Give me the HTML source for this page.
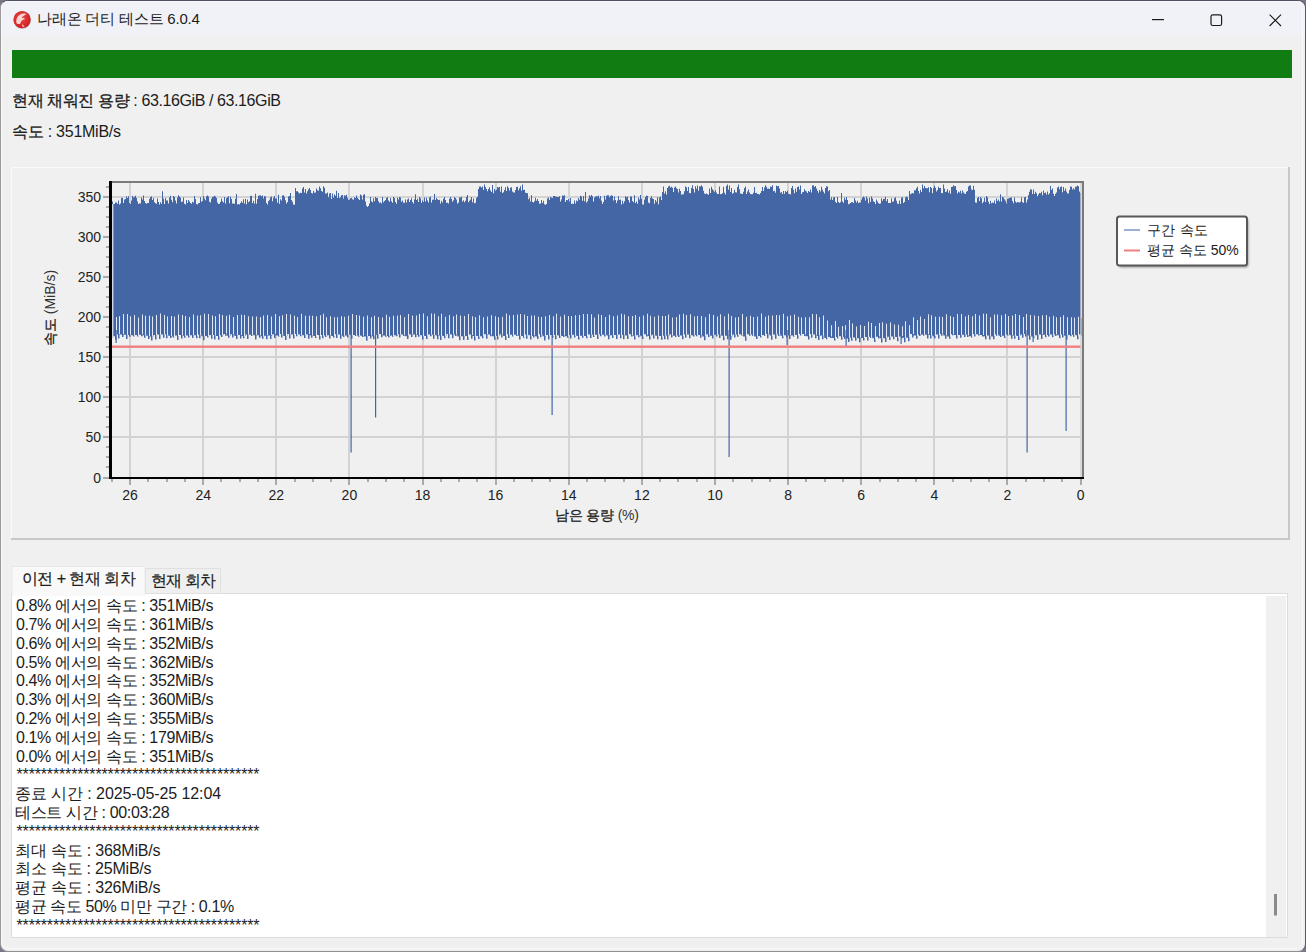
<!DOCTYPE html>
<html><head><meta charset="utf-8">
<style>
html,body{margin:0;padding:0;}
body{width:1306px;height:952px;overflow:hidden;background:#7d7488;position:relative;font-family:"Liberation Sans",sans-serif;color:#1c1c1c;}
.win{position:absolute;left:0;top:0;width:1304px;height:950px;border:1px solid;border-color:#4d5260 #555a68 #909090 #9a9a9a;border-radius:8px;background:#f0f0f0;overflow:hidden;}
.hl{position:absolute;left:1px;top:1px;width:1302px;height:948px;border:1px solid #f8f9fc;border-radius:7px;box-sizing:border-box;}
.title{position:absolute;left:0;top:0;width:1304px;height:40px;background:linear-gradient(#f1f2f8 0,#f1f2f7 75%,#f0f0f0 100%);}
.t{position:absolute;white-space:pre;line-height:1;}
.sk{-webkit-text-stroke:0.3px #1c1c1c;}
svg{position:absolute;left:0;top:0;}
</style></head><body>
<div class="win">
 <div class="title"></div>
</div>
<div class="hl"></div>
<!-- title bar icons -->
<svg width="1306" height="952" viewBox="0 0 1306 952" style="left:0;top:0">
 <defs>
  <filter id="blur1" x="-10%" y="-10%" width="120%" height="120%"><feGaussianBlur stdDeviation="1.2"/></filter>
  <radialGradient id="ig" cx="0.45" cy="0.4" r="0.65"><stop offset="0" stop-color="#e84848"/><stop offset="0.8" stop-color="#d42424"/><stop offset="1" stop-color="#c02030"/></radialGradient>
 </defs>
 <circle cx="22.1" cy="19.9" r="8.9" fill="#8a8a8a" opacity="0.55"/>
 <circle cx="22.1" cy="19.7" r="8.6" fill="url(#ig)"/>
 <path d="M16.3,22.5 C16,18 18.5,14.2 23.5,13.6 C25,13.5 26.2,13.9 26.6,14.3 C24,15.2 22.5,16.6 21.8,18.2 C23.2,17.6 24.6,18.2 25,19.3 C23,19.4 21,20.6 20.2,23.8 C18.5,24.5 16.8,24 16.3,22.5Z" fill="#fde2dc" opacity="0.92"/>
 <path d="M22.2,24.2 C23.2,24.8 24.2,26 24.6,27.2 C23.6,27.4 22.6,26.6 22.0,25.4Z" fill="#fbd0c8" opacity="0.9"/>
 <rect x="1152" y="19" width="12" height="1.2" fill="#1a1a1a"/>
 <rect x="1211" y="14.9" width="10.6" height="10.6" rx="1.8" fill="none" stroke="#1a1a1a" stroke-width="1.2"/>
 <path d="M1269.6,14.6 L1281,26 M1281,14.6 L1269.6,26" stroke="#1a1a1a" stroke-width="1.1"/>
 <!-- progress bar -->
 <rect x="12" y="50" width="1280" height="28" fill="#117c11"/>
 <!-- chart panel -->
 <rect x="11" y="167" width="1278" height="1" fill="#fafafa"/>
 <rect x="11" y="167" width="1" height="372" fill="#fafafa"/>
 <rect x="1288" y="167" width="2" height="373" fill="#c8c8c8"/>
 <rect x="11" y="538" width="1279" height="2" fill="#c8c8c8"/>
 <rect x="1080" y="183" width="2" height="294" fill="#d3d3d3"/>
<rect x="1006" y="183" width="2" height="294" fill="#d3d3d3"/>
<rect x="933" y="183" width="2" height="294" fill="#d3d3d3"/>
<rect x="860" y="183" width="2" height="294" fill="#d3d3d3"/>
<rect x="787" y="183" width="2" height="294" fill="#d3d3d3"/>
<rect x="714" y="183" width="2" height="294" fill="#d3d3d3"/>
<rect x="641" y="183" width="2" height="294" fill="#d3d3d3"/>
<rect x="568" y="183" width="2" height="294" fill="#d3d3d3"/>
<rect x="495" y="183" width="2" height="294" fill="#d3d3d3"/>
<rect x="422" y="183" width="2" height="294" fill="#d3d3d3"/>
<rect x="348" y="183" width="2" height="294" fill="#d3d3d3"/>
<rect x="275" y="183" width="2" height="294" fill="#d3d3d3"/>
<rect x="202" y="183" width="2" height="294" fill="#d3d3d3"/>
<rect x="129" y="183" width="2" height="294" fill="#d3d3d3"/>
<rect x="111" y="436" width="970" height="2" fill="#d3d3d3"/>
<rect x="111" y="396" width="970" height="2" fill="#d3d3d3"/>
<rect x="111" y="356" width="970" height="2" fill="#d3d3d3"/>
<rect x="111" y="316" width="970" height="2" fill="#d3d3d3"/>
<rect x="111" y="276" width="970" height="2" fill="#d3d3d3"/>
<rect x="111" y="236" width="970" height="2" fill="#d3d3d3"/>
<rect x="111" y="196" width="970" height="2" fill="#d3d3d3"/>
 <path d="M112,320 L112.0,201.5 L113.0,201.5 L113.0,204.1 L114.0,204.1 L114.0,204.0 L115.0,204.0 L115.0,202.4 L116.0,202.4 L116.0,202.6 L117.0,202.6 L117.0,203.7 L118.0,203.7 L118.0,200.5 L119.0,200.5 L119.0,204.6 L120.0,204.6 L120.0,203.4 L121.0,203.4 L121.0,198.1 L122.0,198.1 L122.0,197.8 L123.0,197.8 L123.0,203.0 L124.0,203.0 L124.0,199.5 L125.0,199.5 L125.0,198.9 L126.0,198.9 L126.0,196.4 L127.0,196.4 L127.0,198.0 L128.0,198.0 L128.0,196.2 L129.0,196.2 L129.0,202.9 L130.0,202.9 L130.0,204.0 L131.0,204.0 L131.0,200.5 L132.0,200.5 L132.0,195.7 L133.0,195.7 L133.0,197.6 L134.0,197.6 L134.0,196.7 L135.0,196.7 L135.0,195.7 L136.0,195.7 L136.0,197.9 L137.0,197.9 L137.0,201.4 L138.0,201.4 L138.0,203.9 L139.0,203.9 L139.0,203.3 L140.0,203.3 L140.0,203.6 L141.0,203.6 L141.0,197.5 L142.0,197.5 L142.0,199.6 L143.0,199.6 L143.0,195.6 L144.0,195.6 L144.0,200.9 L145.0,200.9 L145.0,203.0 L146.0,203.0 L146.0,203.8 L147.0,203.8 L147.0,202.9 L148.0,202.9 L148.0,203.0 L149.0,203.0 L149.0,199.1 L150.0,199.1 L150.0,197.0 L151.0,197.0 L151.0,196.6 L152.0,196.6 L152.0,199.9 L153.0,199.9 L153.0,197.9 L154.0,197.9 L154.0,202.2 L155.0,202.2 L155.0,203.2 L156.0,203.2 L156.0,203.8 L157.0,203.8 L157.0,198.4 L158.0,198.4 L158.0,202.0 L159.0,202.0 L159.0,204.6 L160.0,204.6 L160.0,202.2 L161.0,202.2 L161.0,203.7 L162.0,203.7 L162.0,191.2 L163.0,191.2 L163.0,198.7 L164.0,198.7 L164.0,204.0 L165.0,204.0 L165.0,198.0 L166.0,198.0 L166.0,200.4 L167.0,200.4 L167.0,200.6 L168.0,200.6 L168.0,203.5 L169.0,203.5 L169.0,197.6 L170.0,197.6 L170.0,195.7 L171.0,195.7 L171.0,199.8 L172.0,199.8 L172.0,202.2 L173.0,202.2 L173.0,195.9 L174.0,195.9 L174.0,196.7 L175.0,196.7 L175.0,200.5 L176.0,200.5 L176.0,203.5 L177.0,203.5 L177.0,197.4 L178.0,197.4 L178.0,195.3 L179.0,195.3 L179.0,196.5 L180.0,196.5 L180.0,197.7 L181.0,197.7 L181.0,201.9 L182.0,201.9 L182.0,201.6 L183.0,201.6 L183.0,197.6 L184.0,197.6 L184.0,203.7 L185.0,203.7 L185.0,204.5 L186.0,204.5 L186.0,200.0 L187.0,200.0 L187.0,202.9 L188.0,202.9 L188.0,200.0 L189.0,200.0 L189.0,201.5 L190.0,201.5 L190.0,202.9 L191.0,202.9 L191.0,203.8 L192.0,203.8 L192.0,201.8 L193.0,201.8 L193.0,202.4 L194.0,202.4 L194.0,196.0 L195.0,196.0 L195.0,198.9 L196.0,198.9 L196.0,203.9 L197.0,203.9 L197.0,204.5 L198.0,204.5 L198.0,203.2 L199.0,203.2 L199.0,202.9 L200.0,202.9 L200.0,197.3 L201.0,197.3 L201.0,201.8 L202.0,201.8 L202.0,201.0 L203.0,201.0 L203.0,195.9 L204.0,195.9 L204.0,198.6 L205.0,198.6 L205.0,200.3 L206.0,200.3 L206.0,196.3 L207.0,196.3 L207.0,195.6 L208.0,195.6 L208.0,196.5 L209.0,196.5 L209.0,201.8 L210.0,201.8 L210.0,202.6 L211.0,202.6 L211.0,198.8 L212.0,198.8 L212.0,197.1 L213.0,197.1 L213.0,196.7 L214.0,196.7 L214.0,195.8 L215.0,195.8 L215.0,196.5 L216.0,196.5 L216.0,198.1 L217.0,198.1 L217.0,202.4 L218.0,202.4 L218.0,204.1 L219.0,204.1 L219.0,203.7 L220.0,203.7 L220.0,201.9 L221.0,201.9 L221.0,198.5 L222.0,198.5 L222.0,201.2 L223.0,201.2 L223.0,202.5 L224.0,202.5 L224.0,196.9 L225.0,196.9 L225.0,203.4 L226.0,203.4 L226.0,198.2 L227.0,198.2 L227.0,197.3 L228.0,197.3 L228.0,196.2 L229.0,196.2 L229.0,203.2 L230.0,203.2 L230.0,196.7 L231.0,196.7 L231.0,199.1 L232.0,199.1 L232.0,203.4 L233.0,203.4 L233.0,203.5 L234.0,203.5 L234.0,203.7 L235.0,203.7 L235.0,198.8 L236.0,198.8 L236.0,194.0 L237.0,194.0 L237.0,204.4 L238.0,204.4 L238.0,204.0 L239.0,204.0 L239.0,204.5 L240.0,204.5 L240.0,202.9 L241.0,202.9 L241.0,201.3 L242.0,201.3 L242.0,202.7 L243.0,202.7 L243.0,199.2 L244.0,199.2 L244.0,203.4 L245.0,203.4 L245.0,198.7 L246.0,198.7 L246.0,204.3 L247.0,204.3 L247.0,199.5 L248.0,199.5 L248.0,202.2 L249.0,202.2 L249.0,201.2 L250.0,201.2 L250.0,196.1 L251.0,196.1 L251.0,195.7 L252.0,195.7 L252.0,202.9 L253.0,202.9 L253.0,200.8 L254.0,200.8 L254.0,203.6 L255.0,203.6 L255.0,193.8 L256.0,193.8 L256.0,203.8 L257.0,203.8 L257.0,199.0 L258.0,199.0 L258.0,195.8 L259.0,195.8 L259.0,195.4 L260.0,195.4 L260.0,195.3 L261.0,195.3 L261.0,196.2 L262.0,196.2 L262.0,195.4 L263.0,195.4 L263.0,198.6 L264.0,198.6 L264.0,196.1 L265.0,196.1 L265.0,196.6 L266.0,196.6 L266.0,203.0 L267.0,203.0 L267.0,204.5 L268.0,204.5 L268.0,201.0 L269.0,201.0 L269.0,199.8 L270.0,199.8 L270.0,197.3 L271.0,197.3 L271.0,196.6 L272.0,196.6 L272.0,201.3 L273.0,201.3 L273.0,197.7 L274.0,197.7 L274.0,196.0 L275.0,196.0 L275.0,198.5 L276.0,198.5 L276.0,198.4 L277.0,198.4 L277.0,202.7 L278.0,202.7 L278.0,194.8 L279.0,194.8 L279.0,203.7 L280.0,203.7 L280.0,199.2 L281.0,199.2 L281.0,200.4 L282.0,200.4 L282.0,195.5 L283.0,195.5 L283.0,195.2 L284.0,195.2 L284.0,196.7 L285.0,196.7 L285.0,200.3 L286.0,200.3 L286.0,203.4 L287.0,203.4 L287.0,201.9 L288.0,201.9 L288.0,196.6 L289.0,196.6 L289.0,196.0 L290.0,196.0 L290.0,193.0 L291.0,193.0 L291.0,200.1 L292.0,200.1 L292.0,201.7 L293.0,201.7 L293.0,204.4 L294.0,204.4 L294.0,204.7 L295.0,204.7 L295.0,188.0 L296.0,188.0 L296.0,191.3 L297.0,191.3 L297.0,191.3 L298.0,191.3 L298.0,192.4 L299.0,192.4 L299.0,193.6 L300.0,193.6 L300.0,192.8 L301.0,192.8 L301.0,192.9 L302.0,192.9 L302.0,188.4 L303.0,188.4 L303.0,187.1 L304.0,187.1 L304.0,192.6 L305.0,192.6 L305.0,189.0 L306.0,189.0 L306.0,193.6 L307.0,193.6 L307.0,191.3 L308.0,191.3 L308.0,189.3 L309.0,189.3 L309.0,187.9 L310.0,187.9 L310.0,189.9 L311.0,189.9 L311.0,193.1 L312.0,193.1 L312.0,193.5 L313.0,193.5 L313.0,191.1 L314.0,191.1 L314.0,192.7 L315.0,192.7 L315.0,192.6 L316.0,192.6 L316.0,188.4 L317.0,188.4 L317.0,190.2 L318.0,190.2 L318.0,190.8 L319.0,190.8 L319.0,186.4 L320.0,186.4 L320.0,188.2 L321.0,188.2 L321.0,190.9 L322.0,190.9 L322.0,191.7 L323.0,191.7 L323.0,186.2 L324.0,186.2 L324.0,187.7 L325.0,187.7 L325.0,193.5 L326.0,193.5 L326.0,193.5 L327.0,193.5 L327.0,192.6 L328.0,192.6 L328.0,197.2 L329.0,197.2 L329.0,193.4 L330.0,193.4 L330.0,192.9 L331.0,192.9 L331.0,199.0 L332.0,199.0 L332.0,193.5 L333.0,193.5 L333.0,197.8 L334.0,197.8 L334.0,194.6 L335.0,194.6 L335.0,195.8 L336.0,195.8 L336.0,190.8 L337.0,190.8 L337.0,198.0 L338.0,198.0 L338.0,193.0 L339.0,193.0 L339.0,198.0 L340.0,198.0 L340.0,197.3 L341.0,197.3 L341.0,195.3 L342.0,195.3 L342.0,195.1 L343.0,195.1 L343.0,198.6 L344.0,198.6 L344.0,195.3 L345.0,195.3 L345.0,195.7 L346.0,195.7 L346.0,194.7 L347.0,194.7 L347.0,197.7 L348.0,197.7 L348.0,199.9 L349.0,199.9 L349.0,199.5 L350.0,199.5 L350.0,198.2 L351.0,198.2 L351.0,197.9 L352.0,197.9 L352.0,199.2 L353.0,199.2 L353.0,199.8 L354.0,199.8 L354.0,197.3 L355.0,197.3 L355.0,198.0 L356.0,198.0 L356.0,195.4 L357.0,195.4 L357.0,197.8 L358.0,197.8 L358.0,198.9 L359.0,198.9 L359.0,200.1 L360.0,200.1 L360.0,194.5 L361.0,194.5 L361.0,195.5 L362.0,195.5 L362.0,199.4 L363.0,199.4 L363.0,194.7 L364.0,194.7 L364.0,194.2 L365.0,194.2 L365.0,201.4 L366.0,201.4 L366.0,205.7 L367.0,205.7 L367.0,207.1 L368.0,207.1 L368.0,205.9 L369.0,205.9 L369.0,203.6 L370.0,203.6 L370.0,197.0 L371.0,197.0 L371.0,201.2 L372.0,201.2 L372.0,202.3 L373.0,202.3 L373.0,198.3 L374.0,198.3 L374.0,201.3 L375.0,201.3 L375.0,197.0 L376.0,197.0 L376.0,198.0 L377.0,198.0 L377.0,198.1 L378.0,198.1 L378.0,201.3 L379.0,201.3 L379.0,203.0 L380.0,203.0 L380.0,202.3 L381.0,202.3 L381.0,203.5 L382.0,203.5 L382.0,197.1 L383.0,197.1 L383.0,202.3 L384.0,202.3 L384.0,201.1 L385.0,201.1 L385.0,200.1 L386.0,200.1 L386.0,197.8 L387.0,197.8 L387.0,197.2 L388.0,197.2 L388.0,200.5 L389.0,200.5 L389.0,201.7 L390.0,201.7 L390.0,198.0 L391.0,198.0 L391.0,201.2 L392.0,201.2 L392.0,202.8 L393.0,202.8 L393.0,196.9 L394.0,196.9 L394.0,198.0 L395.0,198.0 L395.0,202.1 L396.0,202.1 L396.0,203.7 L397.0,203.7 L397.0,197.8 L398.0,197.8 L398.0,199.6 L399.0,199.6 L399.0,196.9 L400.0,196.9 L400.0,197.6 L401.0,197.6 L401.0,201.7 L402.0,201.7 L402.0,200.6 L403.0,200.6 L403.0,202.7 L404.0,202.7 L404.0,202.7 L405.0,202.7 L405.0,199.5 L406.0,199.5 L406.0,202.6 L407.0,202.6 L407.0,199.6 L408.0,199.6 L408.0,198.6 L409.0,198.6 L409.0,202.0 L410.0,202.0 L410.0,200.0 L411.0,200.0 L411.0,198.3 L412.0,198.3 L412.0,202.0 L413.0,202.0 L413.0,203.6 L414.0,203.6 L414.0,199.2 L415.0,199.2 L415.0,194.3 L416.0,194.3 L416.0,199.9 L417.0,199.9 L417.0,198.8 L418.0,198.8 L418.0,202.1 L419.0,202.1 L419.0,197.0 L420.0,197.0 L420.0,198.2 L421.0,198.2 L421.0,202.7 L422.0,202.7 L422.0,200.4 L423.0,200.4 L423.0,202.1 L424.0,202.1 L424.0,197.6 L425.0,197.6 L425.0,201.6 L426.0,201.6 L426.0,197.7 L427.0,197.7 L427.0,200.5 L428.0,200.5 L428.0,202.4 L429.0,202.4 L429.0,197.4 L430.0,197.4 L430.0,196.8 L431.0,196.8 L431.0,202.4 L432.0,202.4 L432.0,199.8 L433.0,199.8 L433.0,199.5 L434.0,199.5 L434.0,194.0 L435.0,194.0 L435.0,200.1 L436.0,200.1 L436.0,198.0 L437.0,198.0 L437.0,199.2 L438.0,199.2 L438.0,200.1 L439.0,200.1 L439.0,199.7 L440.0,199.7 L440.0,203.4 L441.0,203.4 L441.0,200.7 L442.0,200.7 L442.0,202.4 L443.0,202.4 L443.0,198.7 L444.0,198.7 L444.0,197.0 L445.0,197.0 L445.0,200.0 L446.0,200.0 L446.0,202.8 L447.0,202.8 L447.0,202.8 L448.0,202.8 L448.0,203.6 L449.0,203.6 L449.0,198.8 L450.0,198.8 L450.0,197.0 L451.0,197.0 L451.0,198.7 L452.0,198.7 L452.0,201.7 L453.0,201.7 L453.0,200.3 L454.0,200.3 L454.0,197.1 L455.0,197.1 L455.0,198.1 L456.0,198.1 L456.0,199.4 L457.0,199.4 L457.0,203.5 L458.0,203.5 L458.0,202.5 L459.0,202.5 L459.0,197.6 L460.0,197.6 L460.0,197.4 L461.0,197.4 L461.0,196.8 L462.0,196.8 L462.0,201.5 L463.0,201.5 L463.0,200.3 L464.0,200.3 L464.0,202.3 L465.0,202.3 L465.0,200.7 L466.0,200.7 L466.0,196.9 L467.0,196.9 L467.0,195.1 L468.0,195.1 L468.0,202.2 L469.0,202.2 L469.0,200.7 L470.0,200.7 L470.0,199.4 L471.0,199.4 L471.0,197.1 L472.0,197.1 L472.0,202.3 L473.0,202.3 L473.0,198.6 L474.0,198.6 L474.0,203.2 L475.0,203.2 L475.0,202.7 L476.0,202.7 L476.0,197.9 L477.0,197.9 L477.0,196.8 L478.0,196.8 L478.0,189.0 L479.0,189.0 L479.0,186.5 L480.0,186.5 L480.0,186.4 L481.0,186.4 L481.0,187.4 L482.0,187.4 L482.0,186.5 L483.0,186.5 L483.0,189.9 L484.0,189.9 L484.0,184.5 L485.0,184.5 L485.0,187.0 L486.0,187.0 L486.0,189.1 L487.0,189.1 L487.0,191.3 L488.0,191.3 L488.0,189.0 L489.0,189.0 L489.0,187.3 L490.0,187.3 L490.0,190.4 L491.0,190.4 L491.0,192.1 L492.0,192.1 L492.0,185.0 L493.0,185.0 L493.0,193.3 L494.0,193.3 L494.0,188.9 L495.0,188.9 L495.0,190.8 L496.0,190.8 L496.0,189.7 L497.0,189.7 L497.0,187.0 L498.0,187.0 L498.0,187.6 L499.0,187.6 L499.0,187.1 L500.0,187.1 L500.0,191.7 L501.0,191.7 L501.0,186.4 L502.0,186.4 L502.0,192.9 L503.0,192.9 L503.0,192.2 L504.0,192.2 L504.0,190.1 L505.0,190.1 L505.0,187.2 L506.0,187.2 L506.0,191.1 L507.0,191.1 L507.0,186.3 L508.0,186.3 L508.0,187.7 L509.0,187.7 L509.0,190.4 L510.0,190.4 L510.0,187.8 L511.0,187.8 L511.0,187.2 L512.0,187.2 L512.0,191.4 L513.0,191.4 L513.0,192.5 L514.0,192.5 L514.0,192.6 L515.0,192.6 L515.0,190.0 L516.0,190.0 L516.0,187.0 L517.0,187.0 L517.0,186.8 L518.0,186.8 L518.0,190.3 L519.0,190.3 L519.0,188.3 L520.0,188.3 L520.0,186.3 L521.0,186.3 L521.0,190.8 L522.0,190.8 L522.0,184.5 L523.0,184.5 L523.0,190.1 L524.0,190.1 L524.0,189.8 L525.0,189.8 L525.0,192.7 L526.0,192.7 L526.0,193.1 L527.0,193.1 L527.0,193.2 L528.0,193.2 L528.0,199.3 L529.0,199.3 L529.0,198.0 L530.0,198.0 L530.0,201.4 L531.0,201.4 L531.0,195.2 L532.0,195.2 L532.0,202.0 L533.0,202.0 L533.0,202.5 L534.0,202.5 L534.0,201.3 L535.0,201.3 L535.0,197.8 L536.0,197.8 L536.0,200.7 L537.0,200.7 L537.0,199.1 L538.0,199.1 L538.0,200.9 L539.0,200.9 L539.0,203.7 L540.0,203.7 L540.0,203.4 L541.0,203.4 L541.0,200.0 L542.0,200.0 L542.0,203.0 L543.0,203.0 L543.0,200.7 L544.0,200.7 L544.0,204.3 L545.0,204.3 L545.0,204.7 L546.0,204.7 L546.0,204.0 L547.0,204.0 L547.0,198.6 L548.0,198.6 L548.0,197.4 L549.0,197.4 L549.0,200.0 L550.0,200.0 L550.0,197.2 L551.0,197.2 L551.0,197.4 L552.0,197.4 L552.0,197.9 L553.0,197.9 L553.0,195.9 L554.0,195.9 L554.0,195.9 L555.0,195.9 L555.0,196.6 L556.0,196.6 L556.0,196.7 L557.0,196.7 L557.0,197.0 L558.0,197.0 L558.0,196.9 L559.0,196.9 L559.0,196.3 L560.0,196.3 L560.0,201.5 L561.0,201.5 L561.0,199.2 L562.0,199.2 L562.0,195.5 L563.0,195.5 L563.0,195.8 L564.0,195.8 L564.0,195.3 L565.0,195.3 L565.0,202.0 L566.0,202.0 L566.0,199.9 L567.0,199.9 L567.0,200.2 L568.0,200.2 L568.0,199.0 L569.0,199.0 L569.0,201.4 L570.0,201.4 L570.0,198.0 L571.0,198.0 L571.0,204.1 L572.0,204.1 L572.0,203.6 L573.0,203.6 L573.0,203.9 L574.0,203.9 L574.0,200.4 L575.0,200.4 L575.0,203.5 L576.0,203.5 L576.0,200.6 L577.0,200.6 L577.0,201.2 L578.0,201.2 L578.0,197.9 L579.0,197.9 L579.0,199.8 L580.0,199.8 L580.0,195.8 L581.0,195.8 L581.0,196.5 L582.0,196.5 L582.0,200.7 L583.0,200.7 L583.0,196.0 L584.0,196.0 L584.0,201.3 L585.0,201.3 L585.0,192.1 L586.0,192.1 L586.0,202.5 L587.0,202.5 L587.0,201.3 L588.0,201.3 L588.0,198.6 L589.0,198.6 L589.0,195.3 L590.0,195.3 L590.0,196.5 L591.0,196.5 L591.0,195.0 L592.0,195.0 L592.0,196.2 L593.0,196.2 L593.0,201.5 L594.0,201.5 L594.0,197.4 L595.0,197.4 L595.0,196.5 L596.0,196.5 L596.0,196.2 L597.0,196.2 L597.0,196.6 L598.0,196.6 L598.0,195.5 L599.0,195.5 L599.0,198.3 L600.0,198.3 L600.0,196.1 L601.0,196.1 L601.0,200.8 L602.0,200.8 L602.0,203.9 L603.0,203.9 L603.0,202.1 L604.0,202.1 L604.0,195.7 L605.0,195.7 L605.0,199.5 L606.0,199.5 L606.0,195.8 L607.0,195.8 L607.0,195.3 L608.0,195.3 L608.0,195.2 L609.0,195.2 L609.0,197.2 L610.0,197.2 L610.0,196.0 L611.0,196.0 L611.0,195.3 L612.0,195.3 L612.0,195.8 L613.0,195.8 L613.0,200.4 L614.0,200.4 L614.0,196.5 L615.0,196.5 L615.0,200.1 L616.0,200.1 L616.0,202.9 L617.0,202.9 L617.0,200.6 L618.0,200.6 L618.0,196.2 L619.0,196.2 L619.0,200.1 L620.0,200.1 L620.0,199.5 L621.0,199.5 L621.0,204.4 L622.0,204.4 L622.0,200.7 L623.0,200.7 L623.0,203.5 L624.0,203.5 L624.0,201.3 L625.0,201.3 L625.0,196.2 L626.0,196.2 L626.0,197.3 L627.0,197.3 L627.0,196.4 L628.0,196.4 L628.0,200.0 L629.0,200.0 L629.0,202.5 L630.0,202.5 L630.0,196.6 L631.0,196.6 L631.0,196.5 L632.0,196.5 L632.0,200.9 L633.0,200.9 L633.0,202.3 L634.0,202.3 L634.0,195.3 L635.0,195.3 L635.0,202.9 L636.0,202.9 L636.0,201.4 L637.0,201.4 L637.0,203.8 L638.0,203.8 L638.0,197.8 L639.0,197.8 L639.0,199.5 L640.0,199.5 L640.0,195.0 L641.0,195.0 L641.0,198.7 L642.0,198.7 L642.0,204.4 L643.0,204.4 L643.0,204.4 L644.0,204.4 L644.0,199.5 L645.0,199.5 L645.0,197.1 L646.0,197.1 L646.0,195.5 L647.0,195.5 L647.0,196.1 L648.0,196.1 L648.0,202.4 L649.0,202.4 L649.0,203.2 L650.0,203.2 L650.0,198.0 L651.0,198.0 L651.0,196.3 L652.0,196.3 L652.0,198.6 L653.0,198.6 L653.0,198.9 L654.0,198.9 L654.0,203.8 L655.0,203.8 L655.0,200.1 L656.0,200.1 L656.0,201.8 L657.0,201.8 L657.0,197.3 L658.0,197.3 L658.0,204.3 L659.0,204.3 L659.0,197.5 L660.0,197.5 L660.0,196.5 L661.0,196.5 L661.0,200.1 L662.0,200.1 L662.0,191.9 L663.0,191.9 L663.0,186.5 L664.0,186.5 L664.0,193.4 L665.0,193.4 L665.0,191.2 L666.0,191.2 L666.0,194.5 L667.0,194.5 L667.0,187.9 L668.0,187.9 L668.0,186.5 L669.0,186.5 L669.0,185.8 L670.0,185.8 L670.0,187.6 L671.0,187.6 L671.0,186.7 L672.0,186.7 L672.0,187.8 L673.0,187.8 L673.0,192.1 L674.0,192.1 L674.0,187.5 L675.0,187.5 L675.0,186.4 L676.0,186.4 L676.0,188.3 L677.0,188.3 L677.0,189.1 L678.0,189.1 L678.0,192.5 L679.0,192.5 L679.0,188.8 L680.0,188.8 L680.0,190.9 L681.0,190.9 L681.0,194.8 L682.0,194.8 L682.0,194.2 L683.0,194.2 L683.0,194.2 L684.0,194.2 L684.0,191.3 L685.0,191.3 L685.0,186.6 L686.0,186.6 L686.0,187.2 L687.0,187.2 L687.0,190.9 L688.0,190.9 L688.0,187.0 L689.0,187.0 L689.0,193.1 L690.0,193.1 L690.0,193.3 L691.0,193.3 L691.0,188.0 L692.0,188.0 L692.0,185.3 L693.0,185.3 L693.0,188.9 L694.0,188.9 L694.0,192.6 L695.0,192.6 L695.0,186.3 L696.0,186.3 L696.0,188.7 L697.0,188.7 L697.0,185.6 L698.0,185.6 L698.0,190.7 L699.0,190.7 L699.0,186.5 L700.0,186.5 L700.0,186.3 L701.0,186.3 L701.0,185.3 L702.0,185.3 L702.0,186.7 L703.0,186.7 L703.0,190.8 L704.0,190.8 L704.0,193.6 L705.0,193.6 L705.0,194.0 L706.0,194.0 L706.0,193.4 L707.0,193.4 L707.0,194.3 L708.0,194.3 L708.0,194.7 L709.0,194.7 L709.0,188.5 L710.0,188.5 L710.0,193.1 L711.0,193.1 L711.0,186.7 L712.0,186.7 L712.0,189.2 L713.0,189.2 L713.0,190.4 L714.0,190.4 L714.0,192.3 L715.0,192.3 L715.0,190.2 L716.0,190.2 L716.0,192.6 L717.0,192.6 L717.0,193.9 L718.0,193.9 L718.0,194.0 L719.0,194.0 L719.0,186.6 L720.0,186.6 L720.0,194.2 L721.0,194.2 L721.0,193.9 L722.0,193.9 L722.0,193.3 L723.0,193.3 L723.0,186.8 L724.0,186.8 L724.0,192.7 L725.0,192.7 L725.0,194.4 L726.0,194.4 L726.0,185.9 L727.0,185.9 L727.0,184.5 L728.0,184.5 L728.0,189.7 L729.0,189.7 L729.0,185.5 L730.0,185.5 L730.0,192.0 L731.0,192.0 L731.0,188.1 L732.0,188.1 L732.0,193.8 L733.0,193.8 L733.0,193.1 L734.0,193.1 L734.0,189.8 L735.0,189.8 L735.0,192.2 L736.0,192.2 L736.0,192.5 L737.0,192.5 L737.0,187.0 L738.0,187.0 L738.0,184.5 L739.0,184.5 L739.0,189.2 L740.0,189.2 L740.0,193.5 L741.0,193.5 L741.0,193.8 L742.0,193.8 L742.0,194.0 L743.0,194.0 L743.0,191.8 L744.0,191.8 L744.0,187.9 L745.0,187.9 L745.0,186.4 L746.0,186.4 L746.0,194.1 L747.0,194.1 L747.0,191.6 L748.0,191.6 L748.0,189.5 L749.0,189.5 L749.0,192.5 L750.0,192.5 L750.0,194.1 L751.0,194.1 L751.0,194.3 L752.0,194.3 L752.0,194.2 L753.0,194.2 L753.0,192.7 L754.0,192.7 L754.0,186.9 L755.0,186.9 L755.0,193.0 L756.0,193.0 L756.0,192.7 L757.0,192.7 L757.0,194.1 L758.0,194.1 L758.0,194.1 L759.0,194.1 L759.0,194.5 L760.0,194.5 L760.0,193.0 L761.0,193.0 L761.0,190.9 L762.0,190.9 L762.0,186.9 L763.0,186.9 L763.0,191.0 L764.0,191.0 L764.0,187.5 L765.0,187.5 L765.0,185.3 L766.0,185.3 L766.0,186.7 L767.0,186.7 L767.0,188.8 L768.0,188.8 L768.0,188.6 L769.0,188.6 L769.0,189.1 L770.0,189.1 L770.0,186.4 L771.0,186.4 L771.0,187.0 L772.0,187.0 L772.0,185.3 L773.0,185.3 L773.0,191.2 L774.0,191.2 L774.0,190.7 L775.0,190.7 L775.0,192.7 L776.0,192.7 L776.0,185.7 L777.0,185.7 L777.0,186.2 L778.0,186.2 L778.0,186.0 L779.0,186.0 L779.0,188.4 L780.0,188.4 L780.0,192.8 L781.0,192.8 L781.0,192.0 L782.0,192.0 L782.0,194.1 L783.0,194.1 L783.0,191.0 L784.0,191.0 L784.0,193.7 L785.0,193.7 L785.0,191.1 L786.0,191.1 L786.0,192.0 L787.0,192.0 L787.0,190.7 L788.0,190.7 L788.0,193.8 L789.0,193.8 L789.0,194.1 L790.0,194.1 L790.0,194.5 L791.0,194.5 L791.0,188.0 L792.0,188.0 L792.0,185.9 L793.0,185.9 L793.0,189.7 L794.0,189.7 L794.0,193.3 L795.0,193.3 L795.0,188.4 L796.0,188.4 L796.0,191.7 L797.0,191.7 L797.0,186.9 L798.0,186.9 L798.0,186.4 L799.0,186.4 L799.0,189.6 L800.0,189.6 L800.0,185.4 L801.0,185.4 L801.0,193.9 L802.0,193.9 L802.0,192.3 L803.0,192.3 L803.0,192.0 L804.0,192.0 L804.0,189.3 L805.0,189.3 L805.0,190.8 L806.0,190.8 L806.0,191.6 L807.0,191.6 L807.0,193.0 L808.0,193.0 L808.0,191.0 L809.0,191.0 L809.0,192.0 L810.0,192.0 L810.0,189.5 L811.0,189.5 L811.0,192.6 L812.0,192.6 L812.0,185.5 L813.0,185.5 L813.0,185.2 L814.0,185.2 L814.0,187.1 L815.0,187.1 L815.0,186.1 L816.0,186.1 L816.0,188.5 L817.0,188.5 L817.0,190.7 L818.0,190.7 L818.0,192.8 L819.0,192.8 L819.0,190.0 L820.0,190.0 L820.0,191.5 L821.0,191.5 L821.0,186.7 L822.0,186.7 L822.0,189.7 L823.0,189.7 L823.0,191.7 L824.0,191.7 L824.0,193.5 L825.0,193.5 L825.0,187.9 L826.0,187.9 L826.0,186.3 L827.0,186.3 L827.0,186.6 L828.0,186.6 L828.0,191.2 L829.0,191.2 L829.0,190.1 L830.0,190.1 L830.0,199.5 L831.0,199.5 L831.0,197.2 L832.0,197.2 L832.0,200.0 L833.0,200.0 L833.0,197.4 L834.0,197.4 L834.0,197.1 L835.0,197.1 L835.0,201.8 L836.0,201.8 L836.0,203.0 L837.0,203.0 L837.0,197.1 L838.0,197.1 L838.0,201.9 L839.0,201.9 L839.0,202.9 L840.0,202.9 L840.0,202.2 L841.0,202.2 L841.0,192.9 L842.0,192.9 L842.0,201.6 L843.0,201.6 L843.0,202.8 L844.0,202.8 L844.0,197.8 L845.0,197.8 L845.0,199.8 L846.0,199.8 L846.0,197.1 L847.0,197.1 L847.0,199.9 L848.0,199.9 L848.0,204.2 L849.0,204.2 L849.0,203.7 L850.0,203.7 L850.0,203.1 L851.0,203.1 L851.0,202.2 L852.0,202.2 L852.0,202.1 L853.0,202.1 L853.0,203.1 L854.0,203.1 L854.0,198.0 L855.0,198.0 L855.0,200.6 L856.0,200.6 L856.0,202.5 L857.0,202.5 L857.0,200.7 L858.0,200.7 L858.0,202.9 L859.0,202.9 L859.0,202.5 L860.0,202.5 L860.0,202.6 L861.0,202.6 L861.0,199.7 L862.0,199.7 L862.0,197.6 L863.0,197.6 L863.0,196.4 L864.0,196.4 L864.0,197.5 L865.0,197.5 L865.0,200.6 L866.0,200.6 L866.0,196.5 L867.0,196.5 L867.0,198.4 L868.0,198.4 L868.0,203.2 L869.0,203.2 L869.0,197.7 L870.0,197.7 L870.0,201.9 L871.0,201.9 L871.0,196.6 L872.0,196.6 L872.0,198.6 L873.0,198.6 L873.0,201.2 L874.0,201.2 L874.0,202.0 L875.0,202.0 L875.0,203.9 L876.0,203.9 L876.0,199.6 L877.0,199.6 L877.0,201.6 L878.0,201.6 L878.0,203.2 L879.0,203.2 L879.0,203.8 L880.0,203.8 L880.0,203.4 L881.0,203.4 L881.0,198.2 L882.0,198.2 L882.0,200.8 L883.0,200.8 L883.0,199.1 L884.0,199.1 L884.0,198.8 L885.0,198.8 L885.0,196.8 L886.0,196.8 L886.0,201.3 L887.0,201.3 L887.0,199.1 L888.0,199.1 L888.0,202.9 L889.0,202.9 L889.0,202.9 L890.0,202.9 L890.0,203.1 L891.0,203.1 L891.0,198.3 L892.0,198.3 L892.0,201.8 L893.0,201.8 L893.0,201.4 L894.0,201.4 L894.0,198.1 L895.0,198.1 L895.0,197.2 L896.0,197.2 L896.0,200.8 L897.0,200.8 L897.0,203.7 L898.0,203.7 L898.0,203.8 L899.0,203.8 L899.0,200.4 L900.0,200.4 L900.0,204.1 L901.0,204.1 L901.0,197.8 L902.0,197.8 L902.0,197.2 L903.0,197.2 L903.0,203.1 L904.0,203.1 L904.0,201.9 L905.0,201.9 L905.0,197.4 L906.0,197.4 L906.0,196.6 L907.0,196.6 L907.0,197.2 L908.0,197.2 L908.0,200.1 L909.0,200.1 L909.0,190.9 L910.0,190.9 L910.0,194.2 L911.0,194.2 L911.0,193.5 L912.0,193.5 L912.0,193.0 L913.0,193.0 L913.0,193.6 L914.0,193.6 L914.0,190.3 L915.0,190.3 L915.0,190.2 L916.0,190.2 L916.0,188.2 L917.0,188.2 L917.0,186.7 L918.0,186.7 L918.0,191.1 L919.0,191.1 L919.0,193.6 L920.0,193.6 L920.0,189.7 L921.0,189.7 L921.0,191.9 L922.0,191.9 L922.0,184.5 L923.0,184.5 L923.0,188.2 L924.0,188.2 L924.0,186.1 L925.0,186.1 L925.0,188.1 L926.0,188.1 L926.0,188.2 L927.0,188.2 L927.0,188.3 L928.0,188.3 L928.0,187.2 L929.0,187.2 L929.0,192.3 L930.0,192.3 L930.0,187.0 L931.0,187.0 L931.0,188.1 L932.0,188.1 L932.0,193.3 L933.0,193.3 L933.0,188.1 L934.0,188.1 L934.0,185.7 L935.0,185.7 L935.0,187.8 L936.0,187.8 L936.0,191.6 L937.0,191.6 L937.0,190.1 L938.0,190.1 L938.0,186.7 L939.0,186.7 L939.0,187.9 L940.0,187.9 L940.0,188.0 L941.0,188.0 L941.0,193.0 L942.0,193.0 L942.0,193.3 L943.0,193.3 L943.0,184.5 L944.0,184.5 L944.0,188.5 L945.0,188.5 L945.0,192.1 L946.0,192.1 L946.0,191.4 L947.0,191.4 L947.0,189.3 L948.0,189.3 L948.0,192.8 L949.0,192.8 L949.0,190.4 L950.0,190.4 L950.0,193.7 L951.0,193.7 L951.0,186.9 L952.0,186.9 L952.0,186.7 L953.0,186.7 L953.0,185.3 L954.0,185.3 L954.0,186.3 L955.0,186.3 L955.0,186.0 L956.0,186.0 L956.0,190.1 L957.0,190.1 L957.0,193.5 L958.0,193.5 L958.0,191.8 L959.0,191.8 L959.0,192.5 L960.0,192.5 L960.0,190.8 L961.0,190.8 L961.0,193.4 L962.0,193.4 L962.0,190.6 L963.0,190.6 L963.0,192.4 L964.0,192.4 L964.0,193.5 L965.0,193.5 L965.0,194.0 L966.0,194.0 L966.0,191.7 L967.0,191.7 L967.0,191.0 L968.0,191.0 L968.0,186.4 L969.0,186.4 L969.0,185.4 L970.0,185.4 L970.0,185.4 L971.0,185.4 L971.0,189.5 L972.0,189.5 L972.0,189.9 L973.0,189.9 L973.0,185.8 L974.0,185.8 L974.0,189.7 L975.0,189.7 L975.0,202.5 L976.0,202.5 L976.0,202.7 L977.0,202.7 L977.0,197.9 L978.0,197.9 L978.0,197.0 L979.0,197.0 L979.0,201.0 L980.0,201.0 L980.0,197.0 L981.0,197.0 L981.0,198.2 L982.0,198.2 L982.0,203.3 L983.0,203.3 L983.0,201.7 L984.0,201.7 L984.0,197.8 L985.0,197.8 L985.0,201.9 L986.0,201.9 L986.0,196.1 L987.0,196.1 L987.0,197.3 L988.0,197.3 L988.0,201.8 L989.0,201.8 L989.0,204.0 L990.0,204.0 L990.0,200.7 L991.0,200.7 L991.0,203.2 L992.0,203.2 L992.0,202.6 L993.0,202.6 L993.0,203.0 L994.0,203.0 L994.0,200.5 L995.0,200.5 L995.0,203.7 L996.0,203.7 L996.0,198.5 L997.0,198.5 L997.0,200.9 L998.0,200.9 L998.0,199.4 L999.0,199.4 L999.0,201.6 L1000.0,201.6 L1000.0,194.2 L1001.0,194.2 L1001.0,201.6 L1002.0,201.6 L1002.0,196.8 L1003.0,196.8 L1003.0,197.4 L1004.0,197.4 L1004.0,199.3 L1005.0,199.3 L1005.0,200.8 L1006.0,200.8 L1006.0,203.6 L1007.0,203.6 L1007.0,199.1 L1008.0,199.1 L1008.0,198.5 L1009.0,198.5 L1009.0,198.1 L1010.0,198.1 L1010.0,197.5 L1011.0,197.5 L1011.0,197.5 L1012.0,197.5 L1012.0,201.0 L1013.0,201.0 L1013.0,203.2 L1014.0,203.2 L1014.0,197.5 L1015.0,197.5 L1015.0,201.4 L1016.0,201.4 L1016.0,202.7 L1017.0,202.7 L1017.0,202.1 L1018.0,202.1 L1018.0,202.2 L1019.0,202.2 L1019.0,202.5 L1020.0,202.5 L1020.0,201.8 L1021.0,201.8 L1021.0,197.6 L1022.0,197.6 L1022.0,202.2 L1023.0,202.2 L1023.0,202.7 L1024.0,202.7 L1024.0,197.2 L1025.0,197.2 L1025.0,197.1 L1026.0,197.1 L1026.0,202.4 L1027.0,202.4 L1027.0,199.4 L1028.0,199.4 L1028.0,195.2 L1029.0,195.2 L1029.0,191.7 L1030.0,191.7 L1030.0,189.2 L1031.0,189.2 L1031.0,189.6 L1032.0,189.6 L1032.0,194.0 L1033.0,194.0 L1033.0,189.6 L1034.0,189.6 L1034.0,194.1 L1035.0,194.1 L1035.0,191.7 L1036.0,191.7 L1036.0,193.2 L1037.0,193.2 L1037.0,196.2 L1038.0,196.2 L1038.0,194.5 L1039.0,194.5 L1039.0,192.9 L1040.0,192.9 L1040.0,193.2 L1041.0,193.2 L1041.0,191.8 L1042.0,191.8 L1042.0,195.2 L1043.0,195.2 L1043.0,190.6 L1044.0,190.6 L1044.0,193.0 L1045.0,193.0 L1045.0,192.5 L1046.0,192.5 L1046.0,194.5 L1047.0,194.5 L1047.0,191.5 L1048.0,191.5 L1048.0,194.4 L1049.0,194.4 L1049.0,193.3 L1050.0,193.3 L1050.0,186.1 L1051.0,186.1 L1051.0,189.9 L1052.0,189.9 L1052.0,188.6 L1053.0,188.6 L1053.0,193.8 L1054.0,193.8 L1054.0,196.0 L1055.0,196.0 L1055.0,193.7 L1056.0,193.7 L1056.0,192.5 L1057.0,192.5 L1057.0,187.5 L1058.0,187.5 L1058.0,186.6 L1059.0,186.6 L1059.0,189.3 L1060.0,189.3 L1060.0,186.9 L1061.0,186.9 L1061.0,186.4 L1062.0,186.4 L1062.0,192.3 L1063.0,192.3 L1063.0,186.9 L1064.0,186.9 L1064.0,190.8 L1065.0,190.8 L1065.0,188.6 L1066.0,188.6 L1066.0,191.6 L1067.0,191.6 L1067.0,193.2 L1068.0,193.2 L1068.0,193.4 L1069.0,193.4 L1069.0,190.0 L1070.0,190.0 L1070.0,186.6 L1071.0,186.6 L1071.0,186.7 L1072.0,186.7 L1072.0,189.5 L1073.0,189.5 L1073.0,188.2 L1074.0,188.2 L1074.0,189.4 L1075.0,189.4 L1075.0,186.8 L1076.0,186.8 L1076.0,186.5 L1077.0,186.5 L1077.0,185.6 L1078.0,185.6 L1078.0,186.2 L1079.0,186.2 L1079.0,191.4 L1080.0,191.4 L1080.0,193.1 L1081.0,193.1 L1081,320 Z" fill="#4466a5"/>
<path d="M113.00,318V336.3h3.64V318zM115,335.3V339.8h1.5V335.3zM116.59,318V334.6h3.42V318zM118,333.6V338.4h1.5V333.6zM119.96,318V334.6h3.75V318zM122,333.6V337.1h1.5V333.6zM123.66,318V334.8h4.09V318zM126,333.8V338.9h1.5V333.8zM127.71,318V335.1h3.50V318zM129,334.1V336.7h1.5V334.1zM131.15,318V335.3h3.92V318zM133,334.3V336.6h1.5V334.3zM135.02,318V334.9h4.04V318zM137,333.9V336.6h1.5V333.9zM139.01,318V334.7h3.91V318zM141,333.7V336.3h1.5V333.7zM142.87,318V335.3h3.43V318zM144,334.3V337.7h1.5V334.3zM146.25,318V335.7h3.41V318zM148,334.7V339.0h1.5V334.7zM149.61,318V336.5h3.88V318zM151,335.5V340.5h1.5V335.5zM153.45,318V335.0h3.62V318zM155,334.0V339.5h1.5V334.0zM157.02,318V334.4h3.69V318zM159,333.4V338.9h1.5V333.4zM160.66,318V334.6h4.05V318zM163,333.6V337.8h1.5V333.6zM164.65,318V334.3h3.54V318zM166,333.3V338.2h1.5V333.3zM168.14,318V335.7h3.43V318zM170,334.7V337.9h1.5V334.7zM171.53,318V336.4h3.62V318zM173,335.4V337.4h1.5V335.4zM175.10,318V335.5h3.76V318zM177,334.5V340.0h1.5V334.5zM178.81,318V334.9h3.92V318zM181,333.9V338.4h1.5V333.9zM182.68,318V335.7h3.83V318zM184,334.7V337.8h1.5V334.7zM186.45,318V335.5h3.56V318zM188,334.5V337.5h1.5V334.5zM189.96,318V335.3h3.91V318zM192,334.3V338.0h1.5V334.3zM193.82,318V335.3h4.05V318zM196,334.3V338.2h1.5V334.3zM197.81,318V334.4h3.57V318zM199,333.4V338.3h1.5V333.4zM201.33,318V336.2h3.98V318zM203,335.2V340.3h1.5V335.2zM205.26,318V336.0h3.98V318zM207,335.0V337.5h1.5V335.0zM209.19,318V334.9h3.47V318zM211,333.9V338.7h1.5V333.9zM212.62,318V335.0h3.46V318zM214,334.0V339.5h1.5V334.0zM216.03,318V336.0h3.73V318zM218,335.0V339.7h1.5V335.0zM219.71,318V335.3h3.66V318zM221,334.3V337.1h1.5V334.3zM223.32,318V334.0h3.67V318zM225,333.0V335.7h1.5V333.0zM226.94,318V335.8h3.52V318zM228,334.8V337.8h1.5V334.8zM230.41,318V334.2h3.98V318zM232,333.2V337.5h1.5V333.2zM234.34,318V336.0h3.70V318zM236,335.0V339.1h1.5V335.0zM237.99,318V334.9h3.71V318zM240,333.9V338.4h1.5V333.9zM241.65,318V336.0h3.85V318zM243,335.0V338.3h1.5V335.0zM245.45,318V334.5h4.05V318zM247,333.5V338.9h1.5V333.5zM249.45,318V334.8h3.87V318zM251,333.8V336.1h1.5V333.8zM253.27,318V335.2h3.77V318zM255,334.2V339.4h1.5V334.2zM256.99,318V335.2h3.81V318zM259,334.2V337.8h1.5V334.2zM260.75,318V336.2h3.73V318zM262,335.2V338.8h1.5V335.2zM264.43,318V335.7h3.98V318zM266,334.7V339.3h1.5V334.7zM268.36,318V335.4h3.88V318zM270,334.4V339.1h1.5V334.4zM272.19,318V334.2h3.55V318zM274,333.2V338.1h1.5V333.2zM275.69,318V335.4h3.93V318zM278,334.4V336.6h1.5V334.4zM279.57,318V334.1h3.74V318zM281,333.1V337.6h1.5V333.1zM283.25,318V336.0h4.10V318zM285,335.0V340.1h1.5V335.0zM287.30,318V334.0h3.76V318zM289,333.0V338.5h1.5V333.0zM291.02,318V334.6h3.62V318zM293,333.6V338.6h1.5V333.6zM294.59,318V334.1h3.69V318zM296,333.1V336.2h1.5V333.1zM298.23,318V334.6h4.00V318zM300,333.6V336.3h1.5V333.6zM302.18,318V335.2h3.66V318zM304,334.2V337.9h1.5V334.2zM305.79,318V334.5h3.96V318zM308,333.5V338.7h1.5V333.5zM309.70,318V335.3h3.62V318zM311,334.3V337.8h1.5V334.3zM313.27,318V336.0h3.59V318zM315,335.0V338.0h1.5V335.0zM316.81,318V335.1h3.81V318zM319,334.1V339.4h1.5V334.1zM320.58,318V335.1h3.44V318zM322,334.1V338.3h1.5V334.1zM323.97,318V335.5h3.45V318zM325,334.5V337.1h1.5V334.5zM327.37,318V335.2h3.96V318zM329,334.2V338.6h1.5V334.2zM331.28,318V336.1h3.55V318zM333,335.1V337.6h1.5V335.1zM334.78,318V334.2h3.47V318zM336,333.2V338.0h1.5V333.2zM338.20,318V334.6h3.86V318zM340,333.6V338.8h1.5V333.6zM342.01,318V335.7h3.44V318zM343,334.7V336.9h1.5V334.7zM345.40,318V335.5h3.56V318zM347,334.5V337.6h1.5V334.5zM348.91,318V334.8h4.04V318zM351,333.8V338.8h1.5V333.8zM352.90,318V335.0h4.09V318zM355,334.0V336.1h1.5V334.0zM356.94,318V335.4h3.56V318zM358,334.4V336.7h1.5V334.4zM360.44,318V335.7h3.70V318zM362,334.7V337.1h1.5V334.7zM364.09,318V336.5h4.05V318zM366,335.5V340.8h1.5V335.5zM368.09,318V335.9h3.64V318zM370,334.9V338.6h1.5V334.9zM371.68,318V336.2h3.74V318zM373,335.2V339.3h1.5V335.2zM375.37,318V334.7h3.50V318zM377,333.7V338.8h1.5V333.7zM378.82,318V334.1h4.05V318zM381,333.1V337.2h1.5V333.1zM382.82,318V335.6h4.06V318zM385,334.6V336.8h1.5V334.6zM386.83,318V335.9h3.57V318zM388,334.9V337.5h1.5V334.9zM390.35,318V335.4h3.45V318zM392,334.4V336.7h1.5V334.4zM393.75,318V335.2h3.82V318zM396,334.2V336.3h1.5V334.2zM397.52,318V334.3h3.85V318zM399,333.3V337.4h1.5V333.3zM401.32,318V334.4h3.86V318zM403,333.4V336.0h1.5V333.4zM405.13,318V336.2h3.99V318zM407,335.2V338.9h1.5V335.2zM409.07,318V334.3h4.02V318zM411,333.3V337.0h1.5V333.3zM413.04,318V334.4h3.73V318zM415,333.4V337.3h1.5V333.4zM416.72,318V335.0h3.54V318zM418,334.0V336.7h1.5V334.0zM420.20,318V335.3h4.01V318zM422,334.3V339.4h1.5V334.3zM424.16,318V336.0h3.74V318zM426,335.0V339.0h1.5V335.0zM427.86,318V334.4h3.93V318zM430,333.4V336.3h1.5V333.4zM431.73,318V334.7h3.76V318zM433,333.7V338.8h1.5V333.7zM435.44,318V335.5h3.56V318zM437,334.5V339.2h1.5V334.5zM438.96,318V335.5h3.57V318zM440,334.5V339.9h1.5V334.5zM442.48,318V336.0h3.88V318zM444,335.0V338.2h1.5V335.0zM446.31,318V334.0h4.04V318zM448,333.0V338.3h1.5V333.0zM450.31,318V334.6h3.46V318zM452,333.6V338.2h1.5V333.6zM453.72,318V334.4h3.64V318zM455,333.4V336.0h1.5V333.4zM457.31,318V336.5h4.08V318zM459,335.5V340.3h1.5V335.5zM461.34,318V336.3h3.95V318zM463,335.3V339.9h1.5V335.3zM465.24,318V336.1h3.84V318zM467,335.1V339.9h1.5V335.1zM469.03,318V334.4h3.64V318zM471,333.4V338.8h1.5V333.4zM472.62,318V336.1h3.49V318zM474,335.1V340.4h1.5V335.1zM476.07,318V336.0h3.98V318zM478,335.0V339.1h1.5V335.0zM480.00,318V336.2h3.95V318zM482,335.2V338.2h1.5V335.2zM483.90,318V334.3h4.06V318zM486,333.3V338.7h1.5V333.3zM487.91,318V334.6h3.99V318zM490,333.6V336.3h1.5V333.6zM491.85,318V336.3h3.74V318zM494,335.3V339.7h1.5V335.3zM495.54,318V336.0h3.95V318zM497,335.0V339.4h1.5V335.0zM499.44,318V334.2h3.68V318zM501,333.2V337.5h1.5V333.2zM503.08,318V336.1h3.82V318zM505,335.1V339.9h1.5V335.1zM506.84,318V334.3h3.41V318zM508,333.3V338.1h1.5V333.3zM510.20,318V334.8h3.72V318zM512,333.8V336.6h1.5V333.8zM513.87,318V334.7h3.83V318zM516,333.7V336.0h1.5V333.7zM517.66,318V335.7h3.71V318zM519,334.7V339.5h1.5V334.7zM521.32,318V336.1h3.43V318zM523,335.1V337.7h1.5V335.1zM524.70,318V334.6h3.65V318zM526,333.6V338.7h1.5V333.6zM528.30,318V335.2h3.68V318zM530,334.2V339.6h1.5V334.2zM531.93,318V336.1h3.53V318zM533,335.1V337.6h1.5V335.1zM535.41,318V336.4h3.52V318zM537,335.4V339.0h1.5V335.4zM538.88,318V334.3h3.65V318zM540,333.3V337.2h1.5V333.3zM542.48,318V336.3h3.66V318zM544,335.3V340.4h1.5V335.3zM546.09,318V335.1h3.84V318zM548,334.1V339.5h1.5V334.1zM549.88,318V334.9h3.84V318zM552,333.9V337.8h1.5V333.9zM553.67,318V334.9h3.75V318zM555,333.9V339.3h1.5V333.9zM557.37,318V335.4h3.88V318zM559,334.4V338.0h1.5V334.4zM561.20,318V335.9h3.91V318zM563,334.9V337.0h1.5V334.9zM565.06,318V336.2h4.07V318zM567,335.2V337.7h1.5V335.2zM569.07,318V335.0h3.43V318zM570,334.0V338.6h1.5V334.0zM572.46,318V334.7h3.93V318zM574,333.7V337.6h1.5V333.7zM576.34,318V336.0h3.85V318zM578,335.0V339.4h1.5V335.0zM580.15,318V335.7h3.90V318zM582,334.7V337.7h1.5V334.7zM583.99,318V336.0h3.98V318zM586,335.0V338.2h1.5V335.0zM587.92,318V334.4h4.01V318zM590,333.4V338.0h1.5V333.4zM591.88,318V334.7h3.44V318zM593,333.7V337.1h1.5V333.7zM595.27,318V334.8h3.53V318zM597,333.8V339.1h1.5V333.8zM598.75,318V334.3h3.71V318zM600,333.3V336.2h1.5V333.3zM602.41,318V334.7h4.07V318zM604,333.7V336.4h1.5V333.7zM606.43,318V335.6h3.99V318zM608,334.6V339.3h1.5V334.6zM610.37,318V335.2h3.93V318zM612,334.2V338.1h1.5V334.2zM614.25,318V334.9h3.59V318zM616,333.9V339.1h1.5V333.9zM617.79,318V334.6h3.84V318zM620,333.6V338.3h1.5V333.6zM621.58,318V334.9h3.80V318zM623,333.9V339.2h1.5V333.9zM625.33,318V335.4h3.45V318zM627,334.4V339.0h1.5V334.4zM628.73,318V334.3h3.97V318zM631,333.3V336.4h1.5V333.3zM632.64,318V335.7h3.84V318zM634,334.7V339.4h1.5V334.7zM636.44,318V334.9h3.92V318zM638,333.9V337.2h1.5V333.9zM640.31,318V336.2h3.53V318zM642,335.2V339.0h1.5V335.2zM643.79,318V334.3h4.03V318zM646,333.3V336.5h1.5V333.3zM647.77,318V336.1h3.75V318zM649,335.1V339.5h1.5V335.1zM651.47,318V334.7h3.80V318zM653,333.7V338.6h1.5V333.7zM655.22,318V335.7h3.51V318zM657,334.7V339.3h1.5V334.7zM658.68,318V335.9h4.03V318zM661,334.9V339.7h1.5V334.9zM662.66,318V335.8h3.49V318zM664,334.8V339.2h1.5V334.8zM666.10,318V335.5h3.45V318zM667,334.5V339.4h1.5V334.5zM669.50,318V334.2h3.56V318zM671,333.2V337.6h1.5V333.2zM673.00,318V335.7h3.65V318zM675,334.7V337.0h1.5V334.7zM676.60,318V335.6h3.40V318zM678,334.6V337.1h1.5V334.6zM679.96,318V335.4h3.71V318zM682,334.4V339.2h1.5V334.4zM683.62,318V334.6h3.48V318zM685,333.6V337.8h1.5V333.6zM687.05,318V334.5h3.80V318zM689,333.5V338.3h1.5V333.5zM690.79,318V335.3h3.97V318zM693,334.3V336.4h1.5V334.3zM694.71,318V335.1h3.75V318zM696,334.1V336.3h1.5V334.1zM698.41,318V335.0h3.81V318zM700,334.0V337.8h1.5V334.0zM702.17,318V336.5h4.01V318zM704,335.5V340.3h1.5V335.5zM706.13,318V334.2h4.09V318zM708,333.2V336.9h1.5V333.2zM710.17,318V335.8h3.88V318zM712,334.8V338.4h1.5V334.8zM714.00,318V334.7h3.68V318zM716,333.7V336.4h1.5V333.7zM717.63,318V334.5h3.71V318zM719,333.5V338.0h1.5V333.5zM721.29,318V335.8h3.79V318zM723,334.8V340.2h1.5V334.8zM725.03,318V335.8h4.04V318zM727,334.8V339.3h1.5V334.8zM729.02,318V336.2h3.41V318zM730,335.2V339.7h1.5V335.2zM732.38,318V334.4h3.65V318zM734,333.4V337.6h1.5V333.4zM735.98,318V334.4h3.43V318zM737,333.4V336.7h1.5V333.4zM739.36,318V334.3h3.72V318zM741,333.3V335.6h1.5V333.3zM743.03,318V336.5h3.73V318zM745,335.5V340.7h1.5V335.5zM746.71,318V334.3h3.98V318zM749,333.3V335.7h1.5V333.3zM750.64,318V334.6h3.55V318zM752,333.6V335.7h1.5V333.6zM754.13,318V336.5h4.06V318zM756,335.5V339.0h1.5V335.5zM758.14,318V336.1h3.97V318zM760,335.1V337.6h1.5V335.1zM762.06,318V334.9h3.81V318zM764,333.9V336.0h1.5V333.9zM765.82,318V334.1h3.72V318zM767,333.1V338.2h1.5V333.1zM769.50,318V335.6h3.63V318zM771,334.6V339.7h1.5V334.6zM773.07,318V334.6h3.54V318zM775,333.6V338.8h1.5V333.6zM776.57,318V334.3h3.81V318zM778,333.3V336.0h1.5V333.3zM780.33,318V335.8h3.85V318zM782,334.8V338.3h1.5V334.8zM784.13,318V335.2h3.44V318zM786,334.2V337.6h1.5V334.2zM787.51,318V335.6h3.57V318zM789,334.6V339.0h1.5V334.6zM791.03,318V335.5h4.04V318zM793,334.5V336.7h1.5V334.5zM795.02,318V335.0h3.56V318zM797,334.0V338.7h1.5V334.0zM798.53,318V334.1h3.92V318zM800,333.1V335.4h1.5V333.1zM802.40,318V334.1h3.43V318zM804,333.1V336.0h1.5V333.1zM805.77,318V336.3h3.87V318zM808,335.3V339.6h1.5V335.3zM809.60,318V334.0h3.51V318zM811,333.0V337.7h1.5V333.0zM813.05,318V334.5h3.90V318zM815,333.5V338.3h1.5V333.5zM816.90,318V336.0h3.47V318zM818,335.0V340.1h1.5V335.0zM820.32,318V335.4h4.00V318zM822,334.4V339.3h1.5V334.4zM824.27,318V338.0h3.82V318zM826,337.0V339.3h1.5V337.0zM828.04,318V337.0h3.60V318zM830,336.0V338.0h1.5V336.0zM831.59,318V338.0h3.98V318zM834,337.0V340.6h1.5V337.0zM835.52,318V337.1h3.54V318zM837,336.1V338.5h1.5V336.1zM839.02,318V336.2h3.65V318zM841,335.2V339.8h1.5V335.2zM842.61,318V336.9h3.47V318zM844,335.9V339.0h1.5V335.9zM846.03,318V338.4h3.82V318zM848,337.4V342.1h1.5V337.4zM849.81,318V337.7h3.48V318zM851,336.7V340.8h1.5V336.7zM853.24,318V337.5h3.69V318zM855,336.5V340.8h1.5V336.5zM856.87,318V338.3h3.96V318zM859,337.3V342.2h1.5V337.3zM860.78,318V338.1h3.88V318zM863,337.1V340.6h1.5V337.1zM864.61,318V337.1h4.06V318zM867,336.1V340.6h1.5V336.1zM868.62,318V336.8h3.64V318zM870,335.8V338.1h1.5V335.8zM872.21,318V338.3h3.86V318zM874,337.3V342.0h1.5V337.3zM876.02,318V336.7h3.93V318zM878,335.7V338.6h1.5V335.7zM879.90,318V338.2h3.56V318zM881,337.2V342.4h1.5V337.2zM883.41,318V338.2h3.94V318zM885,337.2V342.0h1.5V337.2zM887.30,318V336.8h3.98V318zM889,335.8V340.0h1.5V335.8zM891.23,318V336.4h4.08V318zM893,335.4V339.3h1.5V335.4zM895.25,318V337.0h4.06V318zM897,336.0V341.2h1.5V336.0zM899.26,318V336.5h3.46V318zM901,335.5V338.5h1.5V335.5zM902.67,318V337.8h3.58V318zM904,336.8V342.3h1.5V336.8zM906.20,318V337.7h3.88V318zM908,336.7V341.3h1.5V336.7zM910.04,318V334.1h3.58V318zM912,333.1V337.5h1.5V333.1zM913.57,318V335.6h4.08V318zM916,334.6V338.7h1.5V334.6zM917.59,318V334.8h3.89V318zM919,333.8V336.0h1.5V333.8zM921.43,318V334.4h3.65V318zM923,333.4V335.8h1.5V333.4zM925.03,318V334.7h3.88V318zM927,333.7V338.4h1.5V333.7zM928.86,318V335.0h3.61V318zM930,334.0V338.4h1.5V334.0zM932.42,318V336.3h3.47V318zM934,335.3V338.5h1.5V335.3zM935.84,318V334.6h3.98V318zM938,333.6V338.6h1.5V333.6zM939.77,318V334.0h3.59V318zM941,333.0V335.7h1.5V333.0zM943.31,318V335.5h3.86V318zM945,334.5V338.8h1.5V334.5zM947.13,318V336.5h3.47V318zM949,335.5V338.8h1.5V335.5zM950.54,318V334.2h3.56V318zM952,333.2V335.2h1.5V333.2zM954.05,318V334.9h4.07V318zM956,333.9V338.4h1.5V333.9zM958.07,318V334.9h3.58V318zM960,333.9V337.7h1.5V333.9zM961.60,318V334.7h3.96V318zM964,333.7V337.0h1.5V333.7zM965.51,318V334.5h3.54V318zM967,333.5V336.9h1.5V333.5zM968.99,318V336.2h3.73V318zM971,335.2V337.4h1.5V335.2zM972.67,318V334.1h3.56V318zM974,333.1V336.6h1.5V333.1zM976.19,318V334.2h3.90V318zM978,333.2V335.6h1.5V333.2zM980.04,318V335.1h3.56V318zM982,334.1V336.5h1.5V334.1zM983.55,318V336.3h3.73V318zM985,335.3V339.3h1.5V335.3zM987.23,318V335.4h3.92V318zM989,334.4V339.5h1.5V334.4zM991.10,318V336.4h3.48V318zM993,335.4V339.2h1.5V335.4zM994.52,318V334.5h4.01V318zM996,333.5V335.8h1.5V333.5zM998.48,318V335.8h3.72V318zM1000,334.8V337.1h1.5V334.8zM1002.15,318V335.7h3.54V318zM1004,334.7V337.9h1.5V334.7zM1005.65,318V334.4h3.74V318zM1007,333.4V335.5h1.5V333.4zM1009.33,318V335.2h3.42V318zM1011,334.2V338.8h1.5V334.2zM1012.70,318V335.5h3.75V318zM1014,334.5V338.8h1.5V334.5zM1016.40,318V335.9h4.06V318zM1018,334.9V339.9h1.5V334.9zM1020.41,318V334.6h3.53V318zM1022,333.6V337.7h1.5V333.6zM1023.89,318V334.1h3.55V318zM1025,333.1V336.6h1.5V333.1zM1027.39,318V335.5h3.92V318zM1029,334.5V339.7h1.5V334.5zM1031.26,318V336.4h3.41V318zM1033,335.4V338.2h1.5V335.4zM1034.62,318V335.2h4.06V318zM1037,334.2V339.7h1.5V334.2zM1038.64,318V334.5h3.98V318zM1041,333.5V339.0h1.5V333.5zM1042.57,318V334.8h4.07V318zM1045,333.8V337.2h1.5V333.8zM1046.59,318V334.9h3.42V318zM1048,333.9V336.5h1.5V333.9zM1049.96,318V334.6h3.83V318zM1052,333.6V337.2h1.5V333.6zM1053.73,318V334.6h3.50V318zM1055,333.6V336.0h1.5V333.6zM1057.18,318V335.3h3.50V318zM1059,334.3V338.3h1.5V334.3zM1060.63,318V334.4h3.56V318zM1062,333.4V337.5h1.5V333.4zM1064.14,318V335.7h4.02V318zM1066,334.7V339.7h1.5V334.7zM1068.11,318V335.0h4.06V318zM1070,334.0V336.2h1.5V334.0zM1072.12,318V334.7h3.41V318zM1073,333.7V336.7h1.5V333.7zM1075.48,318V335.3h3.69V318zM1077,334.3V339.3h1.5V334.3zM1079.13,318V334.3h3.76V318zM1081,333.3V336.1h1.5V333.3z" fill="#4466a5"/>
<path d="M116,317.0V337.3h1V317.0zM119,316.3V334.1h1V316.3zM123,313.9V334.1h1V313.9zM127,314.0V335.0h1V314.0zM130,316.2V334.8h1V316.2zM134,314.9V335.5h1V314.9zM138,317.4V335.7h1V317.4zM142,314.6V334.3h1V314.6zM145,315.7V335.3h1V315.7zM149,315.7V336.0h1V315.7zM152,316.4V336.6h1V316.4zM156,315.0V335.1h1V315.0zM160,313.5V334.8h1V313.5zM164,315.0V334.5h1V315.0zM167,316.6V335.2h1V316.6zM171,316.1V336.1h1V316.1zM174,316.5V337.2h1V316.5zM178,314.4V335.9h1V314.4zM182,315.1V335.2h1V315.1zM185,316.0V336.0h1V316.0zM189,317.1V335.7h1V317.1zM193,314.4V335.0h1V314.4zM197,315.6V336.0h1V315.6zM200,315.3V334.9h1V315.3zM204,313.7V336.3h1V313.7zM208,314.1V335.9h1V314.1zM212,315.6V335.1h1V315.6zM215,316.3V335.2h1V316.3zM219,314.1V336.5h1V314.1zM222,315.0V335.3h1V315.0zM226,315.8V333.6h1V315.8zM229,314.8V335.7h1V314.8zM233,316.9V334.0h1V316.9zM237,315.0V335.5h1V315.0zM241,314.7V335.0h1V314.7zM244,315.0V336.4h1V315.0zM248,316.3V334.5h1V316.3zM252,316.5V334.9h1V316.5zM256,316.5V334.8h1V316.5zM260,316.9V335.3h1V316.9zM263,315.5V336.5h1V315.5zM267,315.1V335.2h1V315.1zM271,316.6V335.1h1V316.6zM275,313.9V333.8h1V313.9zM279,316.2V336.0h1V316.2zM282,315.2V334.5h1V315.2zM286,314.1V336.0h1V314.1zM290,314.6V333.9h1V314.6zM294,315.7V334.9h1V315.7zM297,317.0V334.8h1V317.0zM301,313.7V334.9h1V313.7zM305,315.8V335.2h1V315.8zM309,315.7V334.1h1V315.7zM312,315.8V335.3h1V315.8zM316,316.3V336.7h1V316.3zM320,315.3V336.0h1V315.3zM323,313.7V335.9h1V313.7zM326,317.2V335.8h1V317.2zM330,316.2V335.2h1V316.2zM334,317.2V335.9h1V317.2zM337,317.3V334.4h1V317.3zM341,316.2V334.4h1V316.2zM344,316.8V335.7h1V316.8zM348,315.7V335.2h1V315.7zM352,314.1V335.5h1V314.1zM356,315.0V335.4h1V315.0zM359,315.4V336.0h1V315.4zM363,316.8V335.4h1V316.8zM367,315.6V336.4h1V315.6zM371,317.2V335.5h1V317.2zM374,315.7V335.8h1V315.7zM378,316.9V334.5h1V316.9zM382,317.4V334.1h1V317.4zM386,314.8V335.8h1V314.8zM389,316.7V335.8h1V316.7zM393,315.7V336.1h1V315.7zM397,315.6V334.8h1V315.6zM400,314.9V334.4h1V314.9zM404,317.3V334.4h1V317.3zM408,314.1V335.8h1V314.1zM412,315.6V334.0h1V315.6zM416,315.5V334.5h1V315.5zM419,314.0V334.9h1V314.0zM423,313.6V336.2h1V313.6zM427,316.3V335.8h1V316.3zM431,313.6V334.5h1V313.6zM434,313.8V335.1h1V313.8zM438,316.3V335.1h1V316.3zM441,313.7V335.9h1V313.7zM445,316.7V336.2h1V316.7zM449,315.1V334.1h1V315.1zM453,316.2V334.3h1V316.2zM456,314.4V334.3h1V314.4zM460,315.4V336.7h1V315.4zM464,316.0V336.1h1V316.0zM468,313.9V336.7h1V313.9zM472,316.2V335.0h1V316.2zM475,317.1V336.7h1V317.1zM479,315.2V336.7h1V315.2zM483,317.3V336.5h1V317.3zM487,316.6V334.2h1V316.6zM491,315.3V334.4h1V315.3zM495,316.3V336.4h1V316.3zM498,317.3V336.7h1V317.3zM502,316.8V334.2h1V316.8zM506,313.5V336.3h1V313.5zM509,315.2V334.7h1V315.2zM513,314.9V335.6h1V314.9zM517,314.6V335.3h1V314.6zM520,314.0V336.2h1V314.0zM524,314.6V337.0h1V314.6zM527,315.9V335.4h1V315.9zM531,315.5V336.2h1V315.5zM534,315.6V335.6h1V315.6zM538,316.7V336.2h1V316.7zM541,316.9V334.5h1V316.9zM545,316.2V335.9h1V316.2zM549,314.9V335.6h1V314.9zM553,316.2V335.8h1V316.2zM556,313.7V335.7h1V313.7zM560,316.5V336.2h1V316.5zM564,314.8V335.6h1V314.8zM568,315.9V336.6h1V315.9zM571,316.1V334.9h1V316.1zM575,315.2V335.7h1V315.2zM579,315.0V337.0h1V315.0zM583,314.1V336.1h1V314.1zM587,314.1V336.3h1V314.1zM591,314.2V334.4h1V314.2zM594,317.4V335.7h1V317.4zM598,314.3V334.8h1V314.3zM601,315.1V334.3h1V315.1zM605,317.1V334.8h1V317.1zM609,314.8V335.3h1V314.8zM613,316.2V335.8h1V316.2zM617,315.6V334.8h1V315.6zM621,313.7V335.4h1V313.7zM624,314.6V334.7h1V314.6zM628,316.2V335.5h1V316.2zM632,316.1V335.2h1V316.1zM635,315.1V336.6h1V315.1zM639,316.7V334.9h1V316.7zM643,315.6V336.7h1V315.6zM647,313.8V334.5h1V313.8zM650,315.8V336.2h1V315.8zM654,316.7V335.4h1V316.7zM658,315.5V336.5h1V315.5zM662,316.1V336.7h1V316.1zM665,315.9V335.7h1V315.9zM668,314.6V335.3h1V314.6zM672,317.4V334.9h1V317.4zM676,316.9V335.7h1V316.9zM679,314.6V335.2h1V314.6zM683,313.7V336.1h1V313.7zM686,314.9V334.6h1V314.9zM690,314.3V335.3h1V314.3zM694,316.6V334.9h1V316.6zM697,316.0V335.6h1V316.0zM701,315.9V334.8h1V315.9zM705,317.3V336.5h1V317.3zM709,314.0V334.4h1V314.0zM713,314.9V335.6h1V314.9zM717,316.4V335.0h1V316.4zM720,314.3V334.4h1V314.3zM724,316.5V336.7h1V316.5zM728,313.8V335.6h1V313.8zM731,316.0V336.1h1V316.0zM735,317.5V334.4h1V317.5zM738,317.1V335.1h1V317.1zM742,314.1V334.9h1V314.1zM746,316.7V336.7h1V316.7zM750,315.8V334.6h1V315.8zM753,317.1V335.2h1V317.1zM757,316.4V336.5h1V316.4zM761,313.6V335.9h1V313.6zM765,316.8V335.6h1V316.8zM768,315.6V333.7h1V315.6zM772,315.4V336.0h1V315.4zM776,315.0V334.3h1V315.0zM779,315.3V334.7h1V315.3zM783,313.8V336.4h1V313.8zM787,316.2V335.7h1V316.2zM790,315.4V335.3h1V315.4zM794,314.5V336.5h1V314.5zM798,316.8V335.4h1V316.8zM801,317.4V334.8h1V317.4zM805,317.2V334.0h1V317.2zM809,317.2V336.2h1V317.2zM812,313.9V335.0h1V313.9zM816,314.2V334.7h1V314.2zM819,317.2V335.5h1V317.2zM823,315.5V335.8h1V315.5zM827,320.4V338.3h1V320.4zM831,325.2V336.5h1V325.2zM835,320.9V338.5h1V320.9zM838,326.8V337.4h1V326.8zM842,325.9V337.0h1V325.9zM845,325.3V336.6h1V325.3zM849,320.0V338.1h1V320.0zM852,323.6V337.9h1V323.6zM856,326.4V338.1h1V326.4zM860,325.0V337.8h1V325.0zM864,326.1V337.9h1V326.1zM868,321.8V337.1h1V321.8zM871,323.1V337.8h1V323.1zM875,325.9V339.3h1V325.9zM879,322.9V336.2h1V322.9zM882,322.3V338.9h1V322.3zM886,323.7V337.9h1V323.7zM890,322.6V337.1h1V322.6zM894,324.5V336.7h1V324.5zM898,324.8V338.0h1V324.8zM902,326.3V336.1h1V326.3zM905,321.2V337.9h1V321.2zM909,325.3V337.6h1V325.3zM913,317.3V334.0h1V317.3zM917,319.9V336.0h1V319.9zM920,316.4V334.3h1V316.4zM924,319.0V335.3h1V319.0zM928,314.2V334.3h1V314.2zM931,315.3V335.6h1V315.3zM935,316.8V335.9h1V316.8zM939,316.7V335.1h1V316.7zM942,317.1V333.8h1V317.1zM946,314.2V335.2h1V314.2zM950,316.1V336.8h1V316.1zM953,316.9V333.9h1V316.9zM957,314.1V335.6h1V314.1zM961,313.9V334.8h1V313.9zM965,316.6V334.5h1V316.6zM968,315.0V335.0h1V315.0zM972,316.2V336.9h1V316.2zM975,314.0V334.3h1V314.0zM979,315.4V334.0h1V315.4zM983,313.8V335.1h1V313.8zM986,313.8V336.2h1V313.8zM990,317.3V336.2h1V317.3zM994,314.5V336.1h1V314.5zM997,314.6V335.4h1V314.6zM1001,315.3V335.8h1V315.3zM1005,314.0V336.6h1V314.0zM1008,316.1V334.7h1V316.1zM1012,315.6V335.0h1V315.6zM1015,314.1V336.2h1V314.1zM1019,315.0V336.7h1V315.0zM1023,317.1V334.2h1V317.1zM1026,314.1V333.9h1V314.1zM1030,315.1V336.0h1V315.1zM1034,315.4V336.6h1V315.4zM1038,316.0V335.1h1V316.0zM1042,315.3V334.3h1V315.3zM1046,314.9V335.3h1V314.9zM1049,316.8V334.4h1V316.8zM1053,315.7V335.2h1V315.7zM1056,317.3V334.3h1V317.3zM1060,317.0V334.9h1V317.0zM1063,315.3V334.5h1V315.3zM1067,317.3V335.6h1V317.3zM1071,317.2V334.7h1V317.2zM1074,317.4V335.5h1V317.4zM1078,316.7V335.8h1V316.7zM1082,316.1V334.7h1V316.1z" fill="#e2e9f6"/>
<rect x="350.5" y="330" width="1.2" height="122.5" fill="#4466a5"/>
<rect x="375.0" y="330" width="1.2" height="87.5" fill="#4466a5"/>
<rect x="551.5" y="330" width="1.2" height="85" fill="#4466a5"/>
<rect x="728.5" y="330" width="1.2" height="127" fill="#4466a5"/>
<rect x="1026.5" y="330" width="1.2" height="122.5" fill="#4466a5"/>
<rect x="1065.5" y="330" width="1.2" height="101" fill="#4466a5"/>
<rect x="786.5" y="330" width="1.2" height="15" fill="#4466a5"/>
<rect x="845.5" y="330" width="1.2" height="16" fill="#4466a5"/>
<rect x="900.5" y="330" width="1.2" height="14" fill="#4466a5"/>
<rect x="1032.5" y="330" width="1.2" height="12" fill="#4466a5"/>
<rect x="115.5" y="330" width="1.2" height="13" fill="#4466a5"/>
<rect x="112" y="204" width="1.4" height="134" fill="#d0d8e8"/>
 <rect x="111" y="345.5" width="970" height="2.4" fill="#f08080"/>
 <!-- plot frame -->
 <rect x="111" y="181" width="972" height="2" fill="#7a7a7a"/>
 <rect x="1082" y="181" width="2" height="298" fill="#7a7a7a"/>
 <rect x="1080" y="183" width="2" height="294" fill="#dcdcdc" opacity="0.6"/>
 <rect x="109" y="181" width="3" height="298" fill="#000"/>
 <rect x="109" y="477" width="975" height="2" fill="#000"/>
 <rect x="1080" y="479" width="2" height="6" fill="#aaaaaa"/>
<rect x="1061" y="479" width="2" height="3" fill="#aaaaaa"/>
<rect x="1043" y="479" width="2" height="3" fill="#aaaaaa"/>
<rect x="1025" y="479" width="2" height="3" fill="#aaaaaa"/>
<rect x="1006" y="479" width="2" height="6" fill="#aaaaaa"/>
<rect x="988" y="479" width="2" height="3" fill="#aaaaaa"/>
<rect x="970" y="479" width="2" height="3" fill="#aaaaaa"/>
<rect x="952" y="479" width="2" height="3" fill="#aaaaaa"/>
<rect x="933" y="479" width="2" height="6" fill="#aaaaaa"/>
<rect x="915" y="479" width="2" height="3" fill="#aaaaaa"/>
<rect x="897" y="479" width="2" height="3" fill="#aaaaaa"/>
<rect x="879" y="479" width="2" height="3" fill="#aaaaaa"/>
<rect x="860" y="479" width="2" height="6" fill="#aaaaaa"/>
<rect x="842" y="479" width="2" height="3" fill="#aaaaaa"/>
<rect x="824" y="479" width="2" height="3" fill="#aaaaaa"/>
<rect x="805" y="479" width="2" height="3" fill="#aaaaaa"/>
<rect x="787" y="479" width="2" height="6" fill="#aaaaaa"/>
<rect x="769" y="479" width="2" height="3" fill="#aaaaaa"/>
<rect x="751" y="479" width="2" height="3" fill="#aaaaaa"/>
<rect x="732" y="479" width="2" height="3" fill="#aaaaaa"/>
<rect x="714" y="479" width="2" height="6" fill="#aaaaaa"/>
<rect x="696" y="479" width="2" height="3" fill="#aaaaaa"/>
<rect x="677" y="479" width="2" height="3" fill="#aaaaaa"/>
<rect x="659" y="479" width="2" height="3" fill="#aaaaaa"/>
<rect x="641" y="479" width="2" height="6" fill="#aaaaaa"/>
<rect x="623" y="479" width="2" height="3" fill="#aaaaaa"/>
<rect x="604" y="479" width="2" height="3" fill="#aaaaaa"/>
<rect x="586" y="479" width="2" height="3" fill="#aaaaaa"/>
<rect x="568" y="479" width="2" height="6" fill="#aaaaaa"/>
<rect x="549" y="479" width="2" height="3" fill="#aaaaaa"/>
<rect x="531" y="479" width="2" height="3" fill="#aaaaaa"/>
<rect x="513" y="479" width="2" height="3" fill="#aaaaaa"/>
<rect x="495" y="479" width="2" height="6" fill="#aaaaaa"/>
<rect x="476" y="479" width="2" height="3" fill="#aaaaaa"/>
<rect x="458" y="479" width="2" height="3" fill="#aaaaaa"/>
<rect x="440" y="479" width="2" height="3" fill="#aaaaaa"/>
<rect x="422" y="479" width="2" height="6" fill="#aaaaaa"/>
<rect x="403" y="479" width="2" height="3" fill="#aaaaaa"/>
<rect x="385" y="479" width="2" height="3" fill="#aaaaaa"/>
<rect x="367" y="479" width="2" height="3" fill="#aaaaaa"/>
<rect x="348" y="479" width="2" height="6" fill="#aaaaaa"/>
<rect x="330" y="479" width="2" height="3" fill="#aaaaaa"/>
<rect x="312" y="479" width="2" height="3" fill="#aaaaaa"/>
<rect x="294" y="479" width="2" height="3" fill="#aaaaaa"/>
<rect x="275" y="479" width="2" height="6" fill="#aaaaaa"/>
<rect x="257" y="479" width="2" height="3" fill="#aaaaaa"/>
<rect x="239" y="479" width="2" height="3" fill="#aaaaaa"/>
<rect x="220" y="479" width="2" height="3" fill="#aaaaaa"/>
<rect x="202" y="479" width="2" height="6" fill="#aaaaaa"/>
<rect x="184" y="479" width="2" height="3" fill="#aaaaaa"/>
<rect x="166" y="479" width="2" height="3" fill="#aaaaaa"/>
<rect x="147" y="479" width="2" height="3" fill="#aaaaaa"/>
<rect x="129" y="479" width="2" height="6" fill="#aaaaaa"/>
<rect x="111" y="479" width="2" height="3" fill="#aaaaaa"/>
<rect x="103" y="477" width="6" height="2" fill="#aaaaaa"/>
<rect x="106" y="466" width="3" height="2" fill="#aaaaaa"/>
<rect x="106" y="456" width="3" height="2" fill="#aaaaaa"/>
<rect x="106" y="446" width="3" height="2" fill="#aaaaaa"/>
<rect x="103" y="436" width="6" height="2" fill="#aaaaaa"/>
<rect x="106" y="426" width="3" height="2" fill="#aaaaaa"/>
<rect x="106" y="416" width="3" height="2" fill="#aaaaaa"/>
<rect x="106" y="406" width="3" height="2" fill="#aaaaaa"/>
<rect x="103" y="396" width="6" height="2" fill="#aaaaaa"/>
<rect x="106" y="386" width="3" height="2" fill="#aaaaaa"/>
<rect x="106" y="376" width="3" height="2" fill="#aaaaaa"/>
<rect x="106" y="366" width="3" height="2" fill="#aaaaaa"/>
<rect x="103" y="356" width="6" height="2" fill="#aaaaaa"/>
<rect x="106" y="346" width="3" height="2" fill="#aaaaaa"/>
<rect x="106" y="336" width="3" height="2" fill="#aaaaaa"/>
<rect x="106" y="326" width="3" height="2" fill="#aaaaaa"/>
<rect x="103" y="316" width="6" height="2" fill="#aaaaaa"/>
<rect x="106" y="306" width="3" height="2" fill="#aaaaaa"/>
<rect x="106" y="296" width="3" height="2" fill="#aaaaaa"/>
<rect x="106" y="286" width="3" height="2" fill="#aaaaaa"/>
<rect x="103" y="276" width="6" height="2" fill="#aaaaaa"/>
<rect x="106" y="266" width="3" height="2" fill="#aaaaaa"/>
<rect x="106" y="256" width="3" height="2" fill="#aaaaaa"/>
<rect x="106" y="246" width="3" height="2" fill="#aaaaaa"/>
<rect x="103" y="236" width="6" height="2" fill="#aaaaaa"/>
<rect x="106" y="226" width="3" height="2" fill="#aaaaaa"/>
<rect x="106" y="216" width="3" height="2" fill="#aaaaaa"/>
<rect x="106" y="206" width="3" height="2" fill="#aaaaaa"/>
<rect x="103" y="196" width="6" height="2" fill="#aaaaaa"/>
<rect x="106" y="186" width="3" height="2" fill="#aaaaaa"/>
 <g font-family="Liberation Sans" font-size="14" fill="#222">
 <text x="101" y="482.5" text-anchor="end">0</text>
<text x="101" y="442.4" text-anchor="end">50</text>
<text x="101" y="402.2" text-anchor="end">100</text>
<text x="101" y="362.1" text-anchor="end">150</text>
<text x="101" y="322.0" text-anchor="end">200</text>
<text x="101" y="281.9" text-anchor="end">250</text>
<text x="101" y="241.8" text-anchor="end">300</text>
<text x="101" y="201.6" text-anchor="end">350</text>
<text x="1080.6" y="500" text-anchor="middle">0</text>
<text x="1007.5" y="500" text-anchor="middle">2</text>
<text x="934.4" y="500" text-anchor="middle">4</text>
<text x="861.2" y="500" text-anchor="middle">6</text>
<text x="788.1" y="500" text-anchor="middle">8</text>
<text x="715.0" y="500" text-anchor="middle">10</text>
<text x="641.9" y="500" text-anchor="middle">12</text>
<text x="568.8" y="500" text-anchor="middle">14</text>
<text x="495.6" y="500" text-anchor="middle">16</text>
<text x="422.5" y="500" text-anchor="middle">18</text>
<text x="349.4" y="500" text-anchor="middle">20</text>
<text x="276.3" y="500" text-anchor="middle">22</text>
<text x="203.2" y="500" text-anchor="middle">24</text>
<text x="130.0" y="500" text-anchor="middle">26</text>
 </g>
 <!-- legend -->
 <rect x="1118.5" y="218.5" width="130" height="49" rx="3" fill="#000" opacity="0.35" filter="url(#blur1)"/>
 <rect x="1117" y="216.5" width="130" height="49" rx="2.5" fill="#fff" stroke="#585858" stroke-width="2"/>
 <rect x="1124" y="229" width="16" height="2" fill="#9cb0d4"/>
 <rect x="1124" y="249.5" width="16" height="2" fill="#f08080"/>
 <!-- tabs -->
 <rect x="11.5" y="593.5" width="1276" height="344" fill="#fff" stroke="#dcdcdc" stroke-width="1"/>
 <rect x="145.5" y="568.5" width="75" height="25" fill="#efefef" stroke="#e0e0e0" stroke-width="1"/>
 <rect x="12" y="566.5" width="133" height="28" fill="#f9f9f9" stroke="#e8e8e8" stroke-width="1"/>
 <rect x="12.5" y="593" width="132" height="3" fill="#f9f9f9"/>
 <rect x="1266" y="596" width="20" height="341" fill="#f0f0f0"/>
 <rect x="1274" y="894" width="3" height="21.5" fill="#8a8a8a"/>
</svg>
<div class="t" style="left:37.0px;top:10.50px;font-size:15px;letter-spacing:-0.200px;">나래온 더티 테스트 6.0.4</div>

<div class="t" style="left:12.0px;top:92.96px;font-size:16px;letter-spacing:-0.400px;"><span class="sk">현재 채워진 용량</span> : 63.16GiB / 63.16GiB</div>

<div class="t" style="left:12.0px;top:123.96px;font-size:16px;letter-spacing:-0.250px;"><span class="sk">속도</span> : 351MiB/s</div>

<div class="t" style="left:1147.0px;top:223.15px;font-size:14px;letter-spacing:0.250px;">구간 속도</div>

<div class="t" style="left:1147.0px;top:243.15px;font-size:14px;letter-spacing:0.000px;">평균 속도 50%</div>

<div class="t" style="left:555px;top:508.15px;font-size:14px;letter-spacing:-0.25px"><span style="-webkit-text-stroke:0.3px #1c1c1c">남은 용량</span><span style="font-size:14px;margin-left:4px;color:#333">(%)</span></div>
<div class="t" style="left:50px;top:308px;font-size:14px;transform:translate(-50%,-50%) rotate(-90deg);transform-origin:center"><span class="sk">속도</span><span style="color:#333"> (MiB/s)</span></div>
<div class="t" style="left:22.0px;top:571.46px;font-size:16px;letter-spacing:-0.556px;-webkit-text-stroke:0.2px #1c1c1c">이전 + 현재 회차</div>

<div class="t" style="left:151.0px;top:573.46px;font-size:16px;letter-spacing:-0.750px;-webkit-text-stroke:0.2px #1c1c1c">현재 회차</div>

<div class="t" style="left:16.0px;top:598.26px;font-size:16px;letter-spacing:-0.381px;">0.8% 에서의 속도 : 351MiB/s</div>
<div class="t" style="left:16.0px;top:617.05px;font-size:16px;letter-spacing:-0.381px;">0.7% 에서의 속도 : 361MiB/s</div>
<div class="t" style="left:16.0px;top:635.84px;font-size:16px;letter-spacing:-0.381px;">0.6% 에서의 속도 : 352MiB/s</div>
<div class="t" style="left:16.0px;top:654.63px;font-size:16px;letter-spacing:-0.381px;">0.5% 에서의 속도 : 362MiB/s</div>
<div class="t" style="left:16.0px;top:673.42px;font-size:16px;letter-spacing:-0.381px;">0.4% 에서의 속도 : 352MiB/s</div>
<div class="t" style="left:16.0px;top:692.21px;font-size:16px;letter-spacing:-0.381px;">0.3% 에서의 속도 : 360MiB/s</div>
<div class="t" style="left:16.0px;top:711.00px;font-size:16px;letter-spacing:-0.381px;">0.2% 에서의 속도 : 355MiB/s</div>
<div class="t" style="left:16.0px;top:729.79px;font-size:16px;letter-spacing:-0.381px;">0.1% 에서의 속도 : 179MiB/s</div>
<div class="t" style="left:16.0px;top:748.58px;font-size:16px;letter-spacing:-0.381px;">0.0% 에서의 속도 : 351MiB/s</div>
<div class="t" style="left:16.5px;top:767.37px;font-size:16px;letter-spacing:-0.154px;">****************************************</div>
<div class="t" style="left:15.0px;top:786.16px;font-size:16px;letter-spacing:-0.087px;">종료 시간 : 2025-05-25 12:04</div>
<div class="t" style="left:15.0px;top:804.95px;font-size:16px;letter-spacing:-0.344px;">테스트 시간 : 00:03:28</div>
<div class="t" style="left:16.5px;top:823.74px;font-size:16px;letter-spacing:-0.154px;">****************************************</div>
<div class="t" style="left:15.0px;top:842.53px;font-size:16px;letter-spacing:-0.200px;">최대 속도 : 368MiB/s</div>
<div class="t" style="left:15.0px;top:861.32px;font-size:16px;letter-spacing:-0.214px;">최소 속도 : 25MiB/s</div>
<div class="t" style="left:15.0px;top:880.11px;font-size:16px;letter-spacing:-0.200px;">평균 속도 : 326MiB/s</div>
<div class="t" style="left:15.0px;top:898.90px;font-size:16px;letter-spacing:-0.405px;">평균 속도 50% 미만 구간 : 0.1%</div>
<div class="t" style="left:16.5px;top:917.69px;font-size:16px;letter-spacing:-0.154px;">****************************************</div>

</body></html>
